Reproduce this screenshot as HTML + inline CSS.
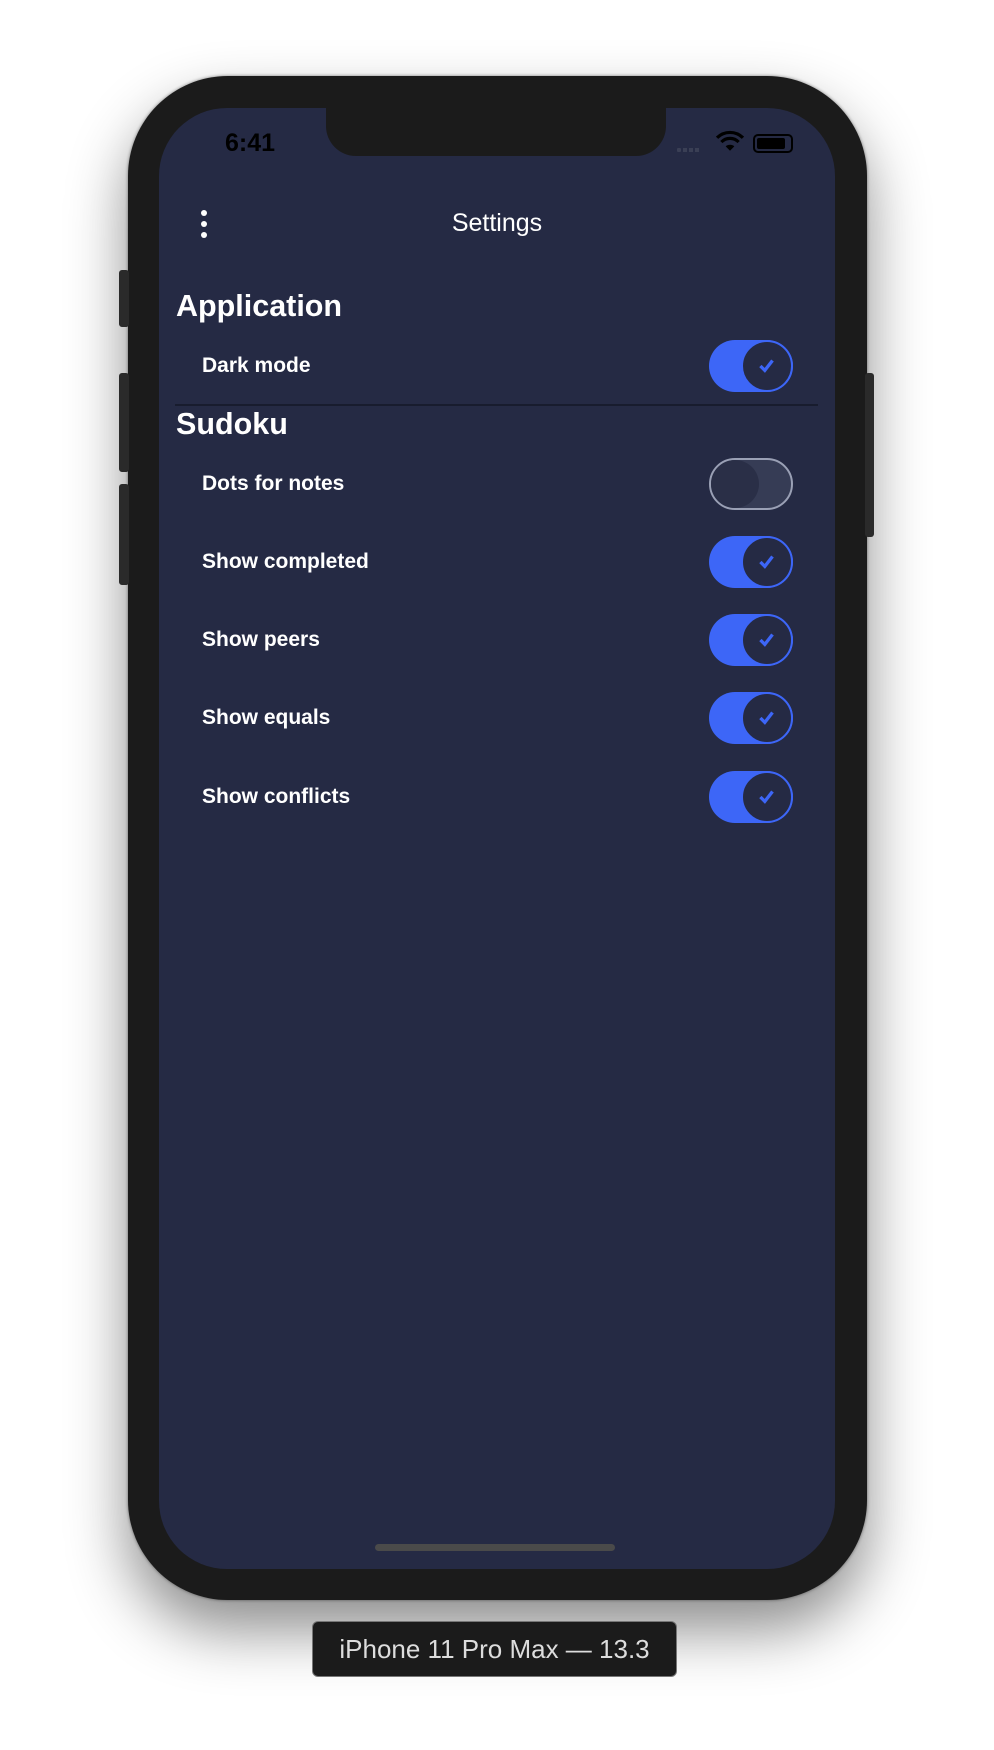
<!DOCTYPE html>
<html><head><meta charset="utf-8"><style>
*{margin:0;padding:0;box-sizing:border-box}
body{width:994px;height:1750px;background:#fff;position:relative;overflow:hidden;font-family:"Liberation Sans",sans-serif}
.phone{position:absolute;left:128px;top:76px;width:739px;height:1524px;background:#1b1b1b;border-radius:100px;box-shadow:0 30px 60px rgba(0,0,0,.45),0 0 3px #888}
.btn{position:absolute;background:#2a2a2a;border-radius:3px}
.screen{position:absolute;left:159px;top:108px;width:676px;height:1461px;background:#252a44;border-radius:68px;overflow:hidden}
.notch{position:absolute;left:167px;top:-2px;width:340px;height:50px;background:#1b1b1b;border-radius:0 0 30px 30px}
.t{position:absolute;color:#fff;white-space:nowrap}
.lbl{left:43px;font-size:21px;font-weight:bold;transform:translateY(-50%)}
.tog{position:absolute;left:550px;width:84px;height:52px;border-radius:26px;background:#3d66f7;transform:translateY(-50%)}
.tog .k{position:absolute;right:0;top:0;width:52px;height:52px;border-radius:50%;background:#252a44;border:2px solid #3d66f7}
.tog .k svg{position:absolute;left:13px;top:13px}
.off{background:#363c55;border:2px solid #9aa0b5}
.off .k{left:0;right:auto;width:48px;height:48px;border:none;background:#2a2f47}
</style></head><body>
<div class="phone"></div>
<div class="btn" style="left:119px;top:270px;width:10px;height:57px"></div>
<div class="btn" style="left:119px;top:373px;width:10px;height:99px"></div>
<div class="btn" style="left:119px;top:484px;width:10px;height:101px"></div>
<div class="btn" style="left:865px;top:373px;width:9px;height:164px"></div>
<div class="screen">
<div class="notch"></div>
<div class="t" style="left:66px;top:21px;font-size:25px;font-weight:bold;color:#000">6:41</div>
<div style="position:absolute;left:518px;top:40px;display:flex;gap:2px"><i style="width:4px;height:4px;background:#3a3f55;border-radius:1px"></i><i style="width:4px;height:4px;background:#3a3f55"></i><i style="width:4px;height:4px;background:#3a3f55"></i><i style="width:4px;height:4px;background:#3a3f55"></i></div>
<svg style="position:absolute;left:557px;top:22px" width="28" height="22" viewBox="0 0 26 20"><path d="M13 19 L9 15 A6 6 0 0 1 17 15Z" fill="#000"/><path d="M5 11 A11 11 0 0 1 21 11" stroke="#000" stroke-width="3" fill="none"/><path d="M1 7 A17 17 0 0 1 25 7" stroke="#000" stroke-width="3" fill="none"/></svg>
<div style="position:absolute;left:594px;top:26px;width:40px;height:19px;border:2px solid #000;border-radius:5px;padding:2px"><div style="width:28px;height:11px;background:#000;border-radius:2px"></div></div>
<div style="position:absolute;left:42px;top:102px;width:6px">
<div style="width:6px;height:6px;border-radius:50%;background:#fff;margin-bottom:5px"></div><div style="width:6px;height:6px;border-radius:50%;background:#fff;margin-bottom:5px"></div><div style="width:6px;height:6px;border-radius:50%;background:#fff"></div></div>
<div class="t" style="left:0;width:676px;text-align:center;top:101px;font-size:25px">Settings</div>
<div class="t" style="left:17px;top:181px;font-size:30.5px;font-weight:bold">Application</div>
<div class="t lbl" style="top:258px">Dark mode</div>
<div class="tog" style="top:258px"><div class="k"><svg width="22" height="22" viewBox="0 0 20 20"><path d="M4 10 L8 14 L15 5" stroke="#3d66f7" stroke-width="3" fill="none"/></svg></div></div>
<div style="position:absolute;left:16px;top:296px;width:643px;height:2px;background:#181c2e"></div>
<div class="t" style="left:17px;top:299px;font-size:30.5px;font-weight:bold">Sudoku</div>
<div class="t lbl" style="top:376px">Dots for notes</div>
<div class="tog off" style="top:376px"><div class="k"></div></div>
<div class="t lbl" style="top:454px">Show completed</div>
<div class="tog" style="top:454px"><div class="k"><svg width="22" height="22" viewBox="0 0 20 20"><path d="M4 10 L8 14 L15 5" stroke="#3d66f7" stroke-width="3" fill="none"/></svg></div></div>
<div class="t lbl" style="top:532px">Show peers</div>
<div class="tog" style="top:532px"><div class="k"><svg width="22" height="22" viewBox="0 0 20 20"><path d="M4 10 L8 14 L15 5" stroke="#3d66f7" stroke-width="3" fill="none"/></svg></div></div>
<div class="t lbl" style="top:610px">Show equals</div>
<div class="tog" style="top:610px"><div class="k"><svg width="22" height="22" viewBox="0 0 20 20"><path d="M4 10 L8 14 L15 5" stroke="#3d66f7" stroke-width="3" fill="none"/></svg></div></div>
<div class="t lbl" style="top:689px">Show conflicts</div>
<div class="tog" style="top:689px"><div class="k"><svg width="22" height="22" viewBox="0 0 20 20"><path d="M4 10 L8 14 L15 5" stroke="#3d66f7" stroke-width="3" fill="none"/></svg></div></div>
<div style="position:absolute;left:216px;top:1436px;width:240px;height:7px;border-radius:4px;background:#4a4a4a"></div>
</div>
<div style="position:absolute;left:312px;top:1621px;width:365px;height:56px;background:#1b1b1b;border-radius:6px;border:1px solid #777;color:#ddd;font-size:26px;text-align:center;line-height:54px">iPhone 11 Pro Max — 13.3</div>
</body></html>
